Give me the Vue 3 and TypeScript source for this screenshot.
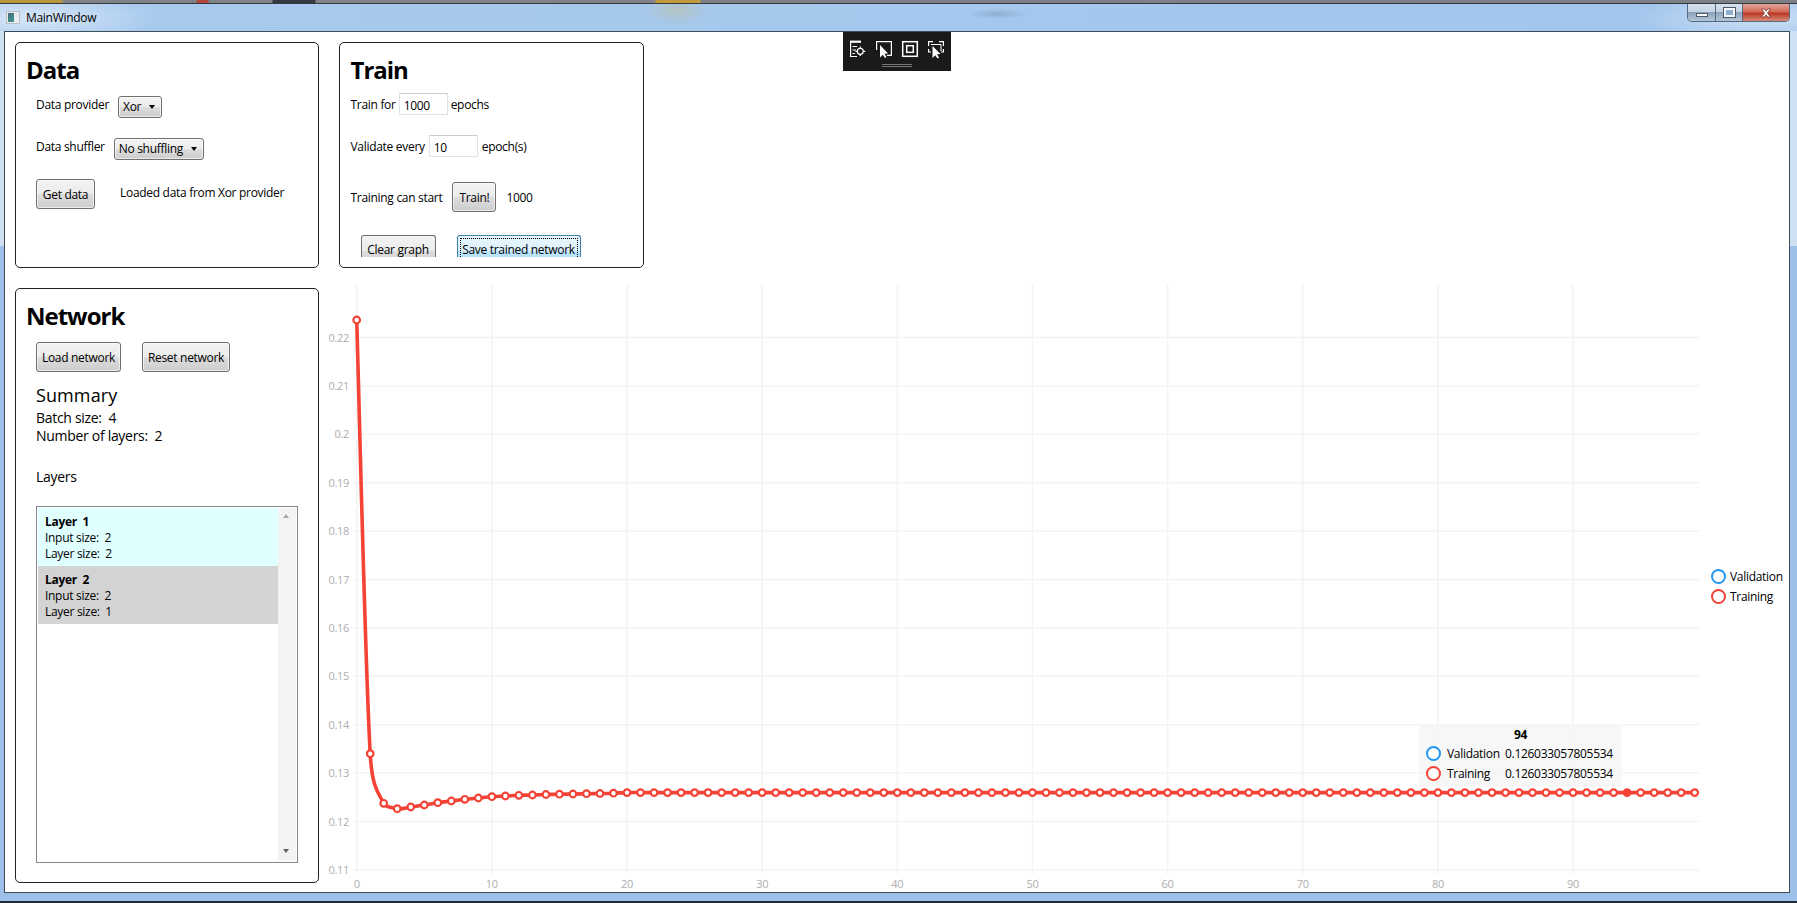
<script setup lang="ts">
// chart origin in the svg, all values read off the plot
const x0 = 37.7
const stepX = 13.515
const yOf = (v: number) => 52.5 + (0.22 - v) * 4840

const firstYs = [35, 468.7, 518.3, 523.7, 522, 520, 517.7, 516, 514.3, 513, 511.7, 511, 510.3, 510, 509.5, 509.2, 509, 508.7, 508.5, 508.2]

const points = Array.from({ length: 100 }, (_, i) => ({
  x: x0 + i * stepX,
  y: i < firstYs.length ? firstYs[i] : 507.6,
  active: i === 94,
}))

const linePath = () => {
  const tangent = (i: number) => {
    const a = points[Math.max(i - 1, 0)]
    const b = points[Math.min(i + 1, points.length - 1)]
    const k = 0.2
    return { dx: (b.x - a.x) * k, dy: (b.y - a.y) * k }
  }
  let d = `M${points[0].x} ${points[0].y}`
  for (let i = 0; i < points.length - 1; i++) {
    const p = points[i]
    const q = points[i + 1]
    const t1 = tangent(i)
    const t2 = tangent(i + 1)
    const gap = Math.abs(q.y - p.y)
    const s1 = Math.abs(t1.dy) > gap * 0.7 && gap > 0 ? (gap * 0.7) / Math.abs(t1.dy) : 1
    const s2 = Math.abs(t2.dy) > gap * 0.7 && gap > 0 ? (gap * 0.7) / Math.abs(t2.dy) : 1
    d += ` C${p.x + t1.dx * s1} ${p.y + t1.dy * s1} ${q.x - t2.dx * s2} ${q.y - t2.dy * s2} ${q.x} ${q.y}`
  }
  return d
}

const yTicks = [0.22, 0.21, 0.2, 0.19, 0.18, 0.17, 0.16, 0.15, 0.14, 0.13, 0.12, 0.11]
const xTicks = [0, 10, 20, 30, 40, 50, 60, 70, 80, 90]

const layers = [
  { name: 'Layer  1', input: 2, size: 2, tone: 'cyan' },
  { name: 'Layer  2', input: 2, size: 1, tone: 'grey' },
]
</script>

<template>
  <div class="window">
    <div class="behind"></div>
    <header class="titlebar">
      <span class="app-icon"><i></i></span>
      <span class="app-title">MainWindow</span>
      <div class="caption">
        <div class="cap cap-min"><i></i></div>
        <div class="cap cap-max"><i></i></div>
        <div class="cap cap-close">
          <svg width="12" height="10" viewBox="0 0 12 10">
            <path d="M1.5 1 H4.3 L6 3.2 L7.7 1 H10.5 L7.5 5 L10.5 9 H7.7 L6 6.8 L4.3 9 H1.5 L4.5 5 Z" fill="#fff" stroke="#6b2a22" stroke-width="0.7" />
          </svg>
        </div>
      </div>
    </header>

    <main class="client">
      <div class="top-row">
        <section class="panel data-panel">
          <h1>Data</h1>
          <div class="row row-provider">
            <span>Data provider</span>
            <button class="btn combo combo-xor">Xor<i class="caret"></i></button>
          </div>
          <div class="row row-shuffler">
            <span>Data shuffler</span>
            <button class="btn combo combo-shuffle">No shuffling<i class="caret"></i></button>
          </div>
          <div class="row row-get">
            <button class="btn btn-get">Get data</button>
            <span class="loaded">Loaded data from Xor provider</span>
          </div>
        </section>

        <section class="panel train-panel">
          <h1>Train</h1>
          <div class="row row-epochs">
            <span>Train for</span>
            <input class="field" value="1000" readonly />
            <span>epochs</span>
          </div>
          <div class="row row-validate">
            <span>Validate every</span>
            <input class="field" value="10" readonly />
            <span>epoch(s)</span>
          </div>
          <div class="row row-start">
            <span>Training can start</span>
            <button class="btn btn-train">Train!</button>
            <span class="count">1000</span>
          </div>
          <div class="cut-row">
            <button class="btn btn-cut btn-clear">Clear graph</button>
            <button class="btn btn-cut btn-save"><span>Save trained network</span></button>
          </div>
        </section>
      </div>

      <div class="bottom-row">
        <section class="panel network-panel">
          <h1>Network</h1>
          <div class="row row-network">
            <button class="btn btn-load">Load network</button>
            <button class="btn btn-reset">Reset network</button>
          </div>
          <h2>Summary</h2>
          <p class="stat">Batch size:&nbsp; 4</p>
          <p class="stat">Number of layers:&nbsp; 2</p>
          <h3>Layers</h3>
          <div class="layer-list">
            <div class="layer-items">
              <div v-for="layer in layers" :key="layer.name" class="layer" :class="layer.tone">
                <strong>{{ layer.name }}</strong>
                <span>Input size:&nbsp; {{ layer.input }}</span>
                <span>Layer size:&nbsp; {{ layer.size }}</span>
              </div>
            </div>
            <div class="scroll">
              <i class="arrow-up"></i>
              <i class="arrow-down"></i>
            </div>
          </div>
        </section>

        <div class="chart">
          <svg class="plot" width="1470" height="608" viewBox="0 0 1470 608">
            <g class="grid">
              <line v-for="t in yTicks" :key="t" :x1="x0 - 3" :x2="1380" :y1="yOf(t)" :y2="yOf(t)" />
              <line v-for="t in xTicks" :key="t" :x1="x0 + t * stepX" :x2="x0 + t * stepX" y1="0" y2="589" />
            </g>
            <g class="labels">
              <text v-for="t in yTicks" :key="t" x="30" :y="yOf(t) + 4" text-anchor="end">{{ t }}</text>
              <text v-for="t in xTicks" :key="t" :x="x0 + t * stepX" y="603" text-anchor="middle">{{ t }}</text>
            </g>
            <path class="series" :d="linePath()" />
            <circle
              v-for="(p, i) in points"
              :key="i"
              class="dot"
              :class="{ active: p.active }"
              :cx="p.x"
              :cy="p.y"
              r="3.3"
            />
          </svg>

          <div class="legend">
            <div class="legend-item"><i class="ring blue"></i>Validation</div>
            <div class="legend-item"><i class="ring red"></i>Training</div>
          </div>

          <div class="tooltip">
            <div class="tip-head">94</div>
            <div class="tip-row"><i class="ring blue"></i><span class="tip-name">Validation</span><span>0.126033057805534</span></div>
            <div class="tip-row"><i class="ring red"></i><span class="tip-name">Training</span><span>0.126033057805534</span></div>
          </div>
        </div>
      </div>
    </main>

    <div class="debug-bar">
      <svg width="108" height="39" viewBox="0 0 108 39" fill="none" stroke="#fff" stroke-width="1.2">
        <path d="M7 9.8 H18 M7.6 9 V24.5 H14 M9.5 14.5 H14 M9.5 18 H13 M9.5 21.5 H12" />
        <path d="M7 9.6 H18" stroke-width="2" />
        <circle cx="17.3" cy="19.3" r="3" />
        <path d="M17.3 14.5 V16.5 M17.3 22 V24 M12.5 19.3 H14.5 M20 19.3 H22.2" />
        <path d="M33.6 18 V9.6 H48.4 V23.4 H44" />
        <path d="M37 13 V25.5 L39.8 22.8 L42 26 L43.5 25 L41.5 21.8 L45 21.5 Z" fill="#fff" stroke="none" />
        <rect x="59.7" y="9.7" width="14.6" height="14.6" stroke-width="1.5" />
        <rect x="63.7" y="13.7" width="6.6" height="6.6" stroke-width="1.5" />
        <path d="M85.6 14 V9.6 H90 M96 9.6 H100.4 V14 M85.6 17 V20 H88 M100.4 17 V20 H98" />
        <path d="M88 12.5 H98 V19" stroke-width="1" />
        <path d="M89.5 14 V26 L92.3 23.3 L94.5 26.5 L96 25.5 L94 22.3 L97.5 22 Z" fill="#fff" stroke="none" />
      </svg>
      <i class="grip"></i>
    </div>
  </div>
</template>

<style>
html,
body {
  margin: 0;
  background: #a3c6ec;
}
</style>

<style scoped>
.window {
  position: relative;
  width: 1797px;
  height: 903px;
  overflow: hidden;
  display: flex;
  flex-direction: column;
  box-sizing: border-box;
  padding: 3px 7px 8px 4px;
  font-family: "Open Sans", "Noto Sans", sans-serif;
  font-size: 12px;
  letter-spacing: -0.3px;
  color: #000;
  background:
    linear-gradient(to bottom, #cfe0f3 0, #cfe0f3 246px, #9cc0e8 246px, #9cc0e8 100%);
  border-bottom: 2px solid #1f2a33;
}

.behind {
  position: absolute;
  left: 0;
  right: 0;
  top: 0;
  height: 3px;
  background: linear-gradient(to right, #b9973f 0, #b9973f 62px, #7f8388 63px, #7f8388 196px, #b4473c 197px, #b4473c 208px, #7f8388 209px, #7f8388 272px, #33393f 273px, #33393f 315px, #7f8388 316px, #7f8388 655px, #c29a3c 656px, #c29a3c 700px, #7c8085 701px);
  border-bottom: 1px solid #33393f;
}

.titlebar {
  position: relative;
  height: 27px;
  margin-left: -4px;
  margin-right: -7px;
  padding-left: 6px;
  display: flex;
  align-items: center;
  gap: 6px;
  flex: none;
  margin-top: 1px;
  background:
    radial-gradient(ellipse 130px 26px at 30px 14px, rgba(255, 255, 255, 0.55), rgba(255, 255, 255, 0) 100%),
    radial-gradient(ellipse 32px 15px at 677px 6px, rgba(195, 190, 140, 0.45), rgba(195, 190, 140, 0) 100%),
    radial-gradient(ellipse 30px 5px at 998px 10px, rgba(90, 115, 150, 0.3), rgba(90, 115, 150, 0) 100%),
    radial-gradient(ellipse 130px 26px at 1760px 14px, rgba(255, 255, 255, 0.45), rgba(255, 255, 255, 0) 100%),
    linear-gradient(to right, #a8caee, #a2c5ec);
}

.app-icon {
  width: 14px;
  height: 13px;
  background: #e8ecef;
  border: 1px solid #b8bfc6;
  box-sizing: border-box;
  display: block;
}

.app-icon i {
  display: block;
  width: 6px;
  height: 9px;
  margin: 1px;
  background: linear-gradient(135deg, #4b6a7f, #3c9a8f);
}

.caption {
  position: absolute;
  top: 0;
  left: 1687px;
  width: 103px;
  height: 18px;
  display: flex;
  border: 1px solid #55687c;
  border-top: 0;
  border-radius: 0 0 5px 5px;
  box-sizing: border-box;
  overflow: hidden;
}

.cap {
  display: flex;
  align-items: center;
  justify-content: center;
  background: linear-gradient(to bottom, #d6e3ef 0, #c3d3e3 45%, #8ba3bb 50%, #b4c6d8 100%);
  border-right: 1px solid #55687c;
  box-sizing: border-box;
}

.cap-min {
  width: 28px;
}

.cap-min i {
  width: 12px;
  height: 4px;
  margin-top: 4px;
  background: #fff;
  border: 1px solid #4c5a68;
  box-sizing: border-box;
}

.cap-max {
  width: 27px;
}

.cap-max i {
  width: 11px;
  height: 9px;
  background: #8fb0cd;
  border: 2px solid #f2f6fa;
  outline: 1px solid #4c5a68;
  box-sizing: border-box;
}

.cap-close {
  flex: 1;
  border-right: 0;
  background: linear-gradient(to bottom, #e3a59b 0, #d46a58 45%, #b93a25 55%, #d98a7a 100%);
}

.client {
  position: relative;
  flex: 1;
  min-height: 0;
  background: #fff;
  border: 1px solid #3f4d5a;
  box-sizing: border-box;
  padding: 10px 0 0 9.5px;
}

.top-row {
  display: flex;
  gap: 20px;
}

.panel {
  border: 1px solid #222;
  border-radius: 5px;
  box-sizing: border-box;
  width: 304.5px;
  background: #fff;
}

.top-row .panel {
  height: 226px;
  overflow: hidden;
}

h1 {
  margin: 0;
  font-size: 24px;
  line-height: 32px;
  font-weight: 700;
  letter-spacing: -1px;
}

h2 {
  margin: 0 0 2px;
  font-size: 18px;
  line-height: 24px;
  font-weight: 400;
  letter-spacing: 0.1px;
}

h3 {
  margin: 0;
  font-size: 14px;
  line-height: 20px;
  font-weight: 400;
}

.row {
  display: flex;
  align-items: center;
}

.btn {
  font: inherit;
  letter-spacing: inherit;
  color: #000;
  padding: 0;
  box-sizing: border-box;
  border: 1px solid #707070;
  border-radius: 3px;
  background: linear-gradient(to bottom, #f3f3f3 0, #ebebeb 50%, #dddddd 50%, #cdcdcd 100%);
  box-shadow: inset 0 0 0 1px rgba(255, 255, 255, 0.6);
}

.combo {
  display: flex;
  align-items: center;
  justify-content: space-between;
  padding: 0 6px 0 4px;
  height: 22px;
  white-space: nowrap;
}

.caret {
  width: 0;
  height: 0;
  border-left: 3.5px solid transparent;
  border-right: 3.5px solid transparent;
  border-top: 4px solid #000;
}

.field {
  font: inherit;
  letter-spacing: inherit;
  box-sizing: border-box;
  height: 22px;
  width: 49px;
  padding: 2px 0 0 4px;
  border: 1px solid #dfe4ea;
  border-top-color: #c9ced4;
  outline: none;
  color: #000;
}

/* data panel */
.data-panel {
  padding: 11px 0 0 10.5px;
}

.data-panel .row {
  padding-left: 10px;
}

.row-provider {
  margin-top: 6px;
  height: 24px;
}

.combo-xor {
  width: 44px;
  margin-left: 9px;
  margin-top: 5px;
}

.row-shuffler {
  margin-top: 18px;
  height: 24px;
}

.combo-shuffle {
  width: 90px;
  margin-left: 9px;
  margin-top: 5px;
}

.row-get {
  margin-top: 21px;
}

.btn-get {
  width: 59px;
  height: 30px;
}

.loaded {
  margin-left: 25px;
  margin-top: -4px;
}

/* train panel */
.train-panel {
  padding: 11px 0 0 10.5px;
  position: relative;
}

.train-panel .field {
  margin: 0 3px;
}

.train-panel .row-validate .field {
  margin: 0 4px;
}

.row-epochs {
  margin-top: 6px;
  height: 24px;
}

.row-validate {
  margin-top: 18px;
  height: 24px;
}

.row-start {
  margin-top: 24px;
}

.btn-train {
  width: 44px;
  height: 30px;
  margin-left: 10px;
}

.count {
  margin-left: 10px;
}

.cut-row {
  margin-top: 23px;
  padding-left: 10px;
  display: flex;
  gap: 21px;
}

/* buttons run past the panel's clip in the app, only their top 22px show */
.btn-cut {
  height: 22px;
  flex: none;
  padding-top: 6px;
  line-height: 16px;
  border-bottom: 0;
  border-radius: 3px 3px 0 0;
  background-size: 100% 30px;
  background-repeat: no-repeat;
  box-shadow: none;
}

.btn-clear {
  width: 75px;
}

.btn-save {
  width: 124px;
  border-color: #3c7fb1;
  background-image: linear-gradient(to bottom, #eaf6fd 0, #d9f0fc 50%, #bee6fd 50%, #a7d9f5 100%);
  padding: 2px 2px 0;
}

.btn-save span {
  display: block;
  height: 100%;
  box-sizing: border-box;
  padding-top: 3px;
  line-height: 16px;
  border: 1px dotted #000;
  border-bottom: 0;
  white-space: nowrap;
}

/* network panel */
.bottom-row {
  display: flex;
  margin-top: 17px;
  height: 608px;
}

.network-panel {
  flex: none;
  height: 595px;
  margin-top: 3px;
  padding: 11px 0 0 10.5px;
}

.row-network {
  margin-top: 10px;
  margin-left: 10px;
  gap: 21px;
}

.btn-load {
  width: 85px;
  height: 30px;
}

.btn-reset {
  width: 88px;
  height: 30px;
}

.network-panel h2 {
  margin: 11px 0 2px 10px;
}

.stat {
  margin: 0 0 0 10px;
  font-size: 14px;
  line-height: 18px;
  white-space: pre-wrap;
}

.network-panel h3 {
  margin: 22px 0 0 10px;
}

.layer-list {
  margin: 19px 0 0 10px;
  width: 262px;
  height: 357px;
  border: 1px solid #828790;
  box-sizing: border-box;
  padding: 1px;
  display: flex;
}

.layer-items {
  flex: 1;
}

.layer {
  height: 58px;
  padding: 6px 0 0 7px;
  box-sizing: border-box;
  display: flex;
  flex-direction: column;
  line-height: 16px;
}

.layer strong {
  white-space: pre;
}

.layer.cyan {
  background: #e0ffff;
}

.layer.grey {
  background: #d3d3d3;
}

.scroll {
  position: relative;
  width: 18px;
  background: #f3f3f3;
}

.arrow-up,
.arrow-down {
  position: absolute;
  left: 5px;
  width: 0;
  height: 0;
  border-left: 3px solid transparent;
  border-right: 3px solid transparent;
}

.arrow-up {
  top: 6px;
  border-bottom: 4px solid #a8a8a8;
}

.arrow-down {
  bottom: 8px;
  border-top: 4px solid #606060;
}

/* chart */
.chart {
  position: relative;
  flex: 1;
  min-width: 0;
}

.plot {
  display: block;
}

.grid line {
  stroke: #f3f3f3;
  stroke-width: 1.5;
}

.labels text {
  fill: #aeaeae;
  font-size: 11px;
  font-family: "Open Sans", sans-serif;
}

.series {
  fill: none;
  stroke: #f44336;
  stroke-width: 3.6;
}

.dot {
  fill: #fff;
  stroke: #f44336;
  stroke-width: 2.2;
}

.dot.active {
  fill: #f44336;
}

.ring {
  display: block;
  flex: none;
  box-sizing: border-box;
  width: 15px;
  height: 15px;
  border-radius: 50%;
  border: 2px solid;
  background: #fff;
}

.ring.blue {
  border-color: #2196f3;
}

.ring.red {
  border-color: #f44336;
}

.legend {
  position: absolute;
  left: 1392px;
  top: 281px;
}

.legend-item {
  display: flex;
  align-items: center;
  gap: 4px;
  height: 20px;
  white-space: nowrap;
}

.tooltip {
  position: absolute;
  left: 1100px;
  top: 439px;
  width: 203px;
  height: 63px;
  box-sizing: border-box;
  padding: 3px 0 0 7px;
  background: rgba(246, 246, 246, 0.85);
}

.tip-head {
  font-weight: 700;
  text-align: center;
  line-height: 16px;
  padding-right: 7px;
}

.tip-row {
  display: flex;
  align-items: center;
  height: 20px;
  white-space: nowrap;
}

.tip-name {
  width: 58px;
  margin-left: 6px;
}

/* overlay toolbar */
.debug-bar {
  position: absolute;
  left: 843px;
  top: 32px;
  width: 108px;
  height: 39px;
  background: #1a1a1a;
}

.debug-bar svg {
  display: block;
}

.grip {
  position: absolute;
  left: 39px;
  top: 32px;
  width: 30px;
  height: 1px;
  border-top: 1px solid #777;
  border-bottom: 1px solid #777;
}
</style>
